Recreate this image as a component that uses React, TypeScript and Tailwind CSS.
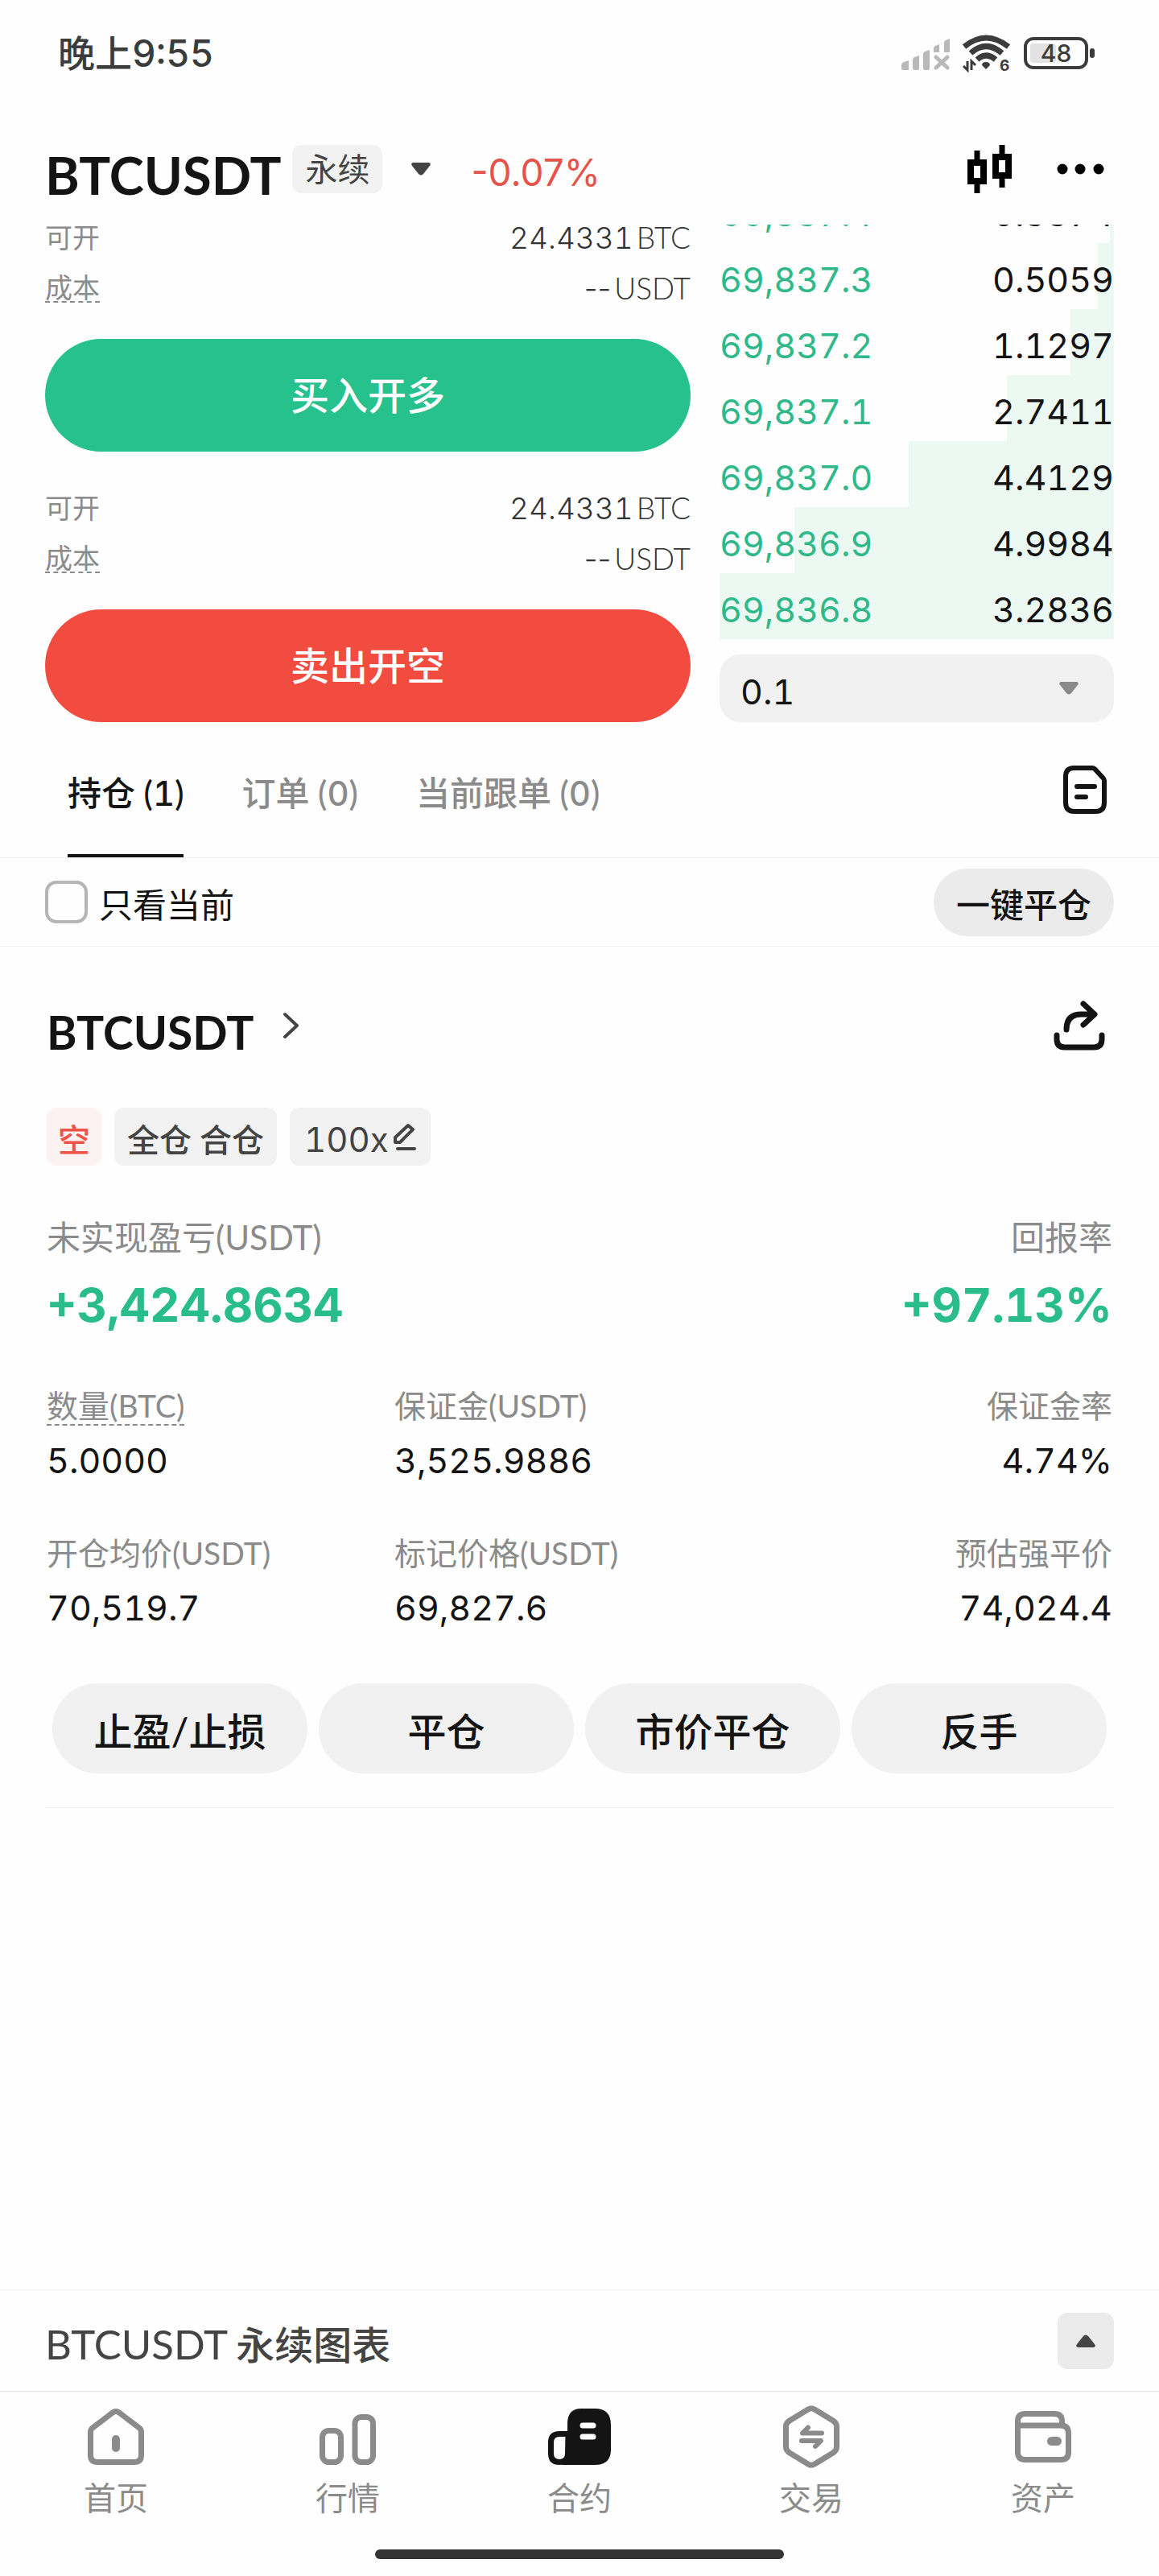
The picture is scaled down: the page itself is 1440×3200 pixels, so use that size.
import type { ReactNode } from "react";

const bids = [
  { price: "69,837.4", size: "0.3374", depth: 1 },
  { price: "69,837.3", size: "0.5059", depth: 4 },
  { price: "69,837.2", size: "1.1297", depth: 11 },
  { price: "69,837.1", size: "2.7411", depth: 27 },
  { price: "69,837.0", size: "4.4129", depth: 52 },
  { price: "69,836.9", size: "4.9984", depth: 81 },
  { price: "69,836.8", size: "3.2836", depth: 100 },
];

const tabs = [
  { label: "持仓", count: 1 },
  { label: "订单", count: 0 },
  { label: "当前跟单", count: 0 },
];

const stats = [
  { label: "数量(BTC)", value: "5.0000", hint: true },
  { label: "保证金(USDT)", value: "3,525.9886" },
  { label: "保证金率", value: "4.74%" },
  { label: "开仓均价(USDT)", value: "70,519.7" },
  { label: "标记价格(USDT)", value: "69,827.6" },
  { label: "预估强平价", value: "74,024.4" },
];

const actions = ["止盈/止损", "平仓", "市价平仓", "反手"];

export default function App() {
  return (
    <div className="flex min-h-screen flex-col bg-[#fefefe] text-[#141414] [font-family:Lato,'Noto_Sans_CJK_SC',sans-serif]">
      <StatusBar />
      <Header />
      <section className="grid h-[618px] grid-cols-[802fr_490fr] content-end items-end gap-9 overflow-hidden px-14">
        <div className="flex flex-col gap-10">
          <OrderSide label="买入开多" className="bg-[#26c18c]" />
          <OrderSide label="卖出开空" className="bg-[#f24c40]" />
        </div>
        <OrderBook />
      </section>
      <PositionTabs />
      <FilterRow />
      <Position />
      <div className="mt-auto">
        <ChartBar />
        <BottomNav />
      </div>
    </div>
  );
}

function Num({ children, className = "" }: { children: ReactNode; className?: string }) {
  return <span className={`[font-family:Inter,sans-serif] ${className}`}>{children}</span>;
}

function StatusBar() {
  return (
    <div className="flex h-[132px] items-center justify-between pl-[72px] pr-20 text-[#3c3c3c]">
      <div className="text-[46px] font-medium leading-none">
        晚上<Num className="tabular-nums">9:55</Num>
      </div>
      <div className="flex items-center gap-4">
        <svg width="60" height="42" viewBox="0 0 60 42" fill="#b9b9b9">
          <path d="M0 36q0-3 3-4l6-2v12H2q-2 0-2-2z" />
          <path d="M14 29q0-2 2-3l6-2v16q0 2-2 2h-4q-2 0-2-2z" />
          <path d="M27 22q0-2 2-3l6-2v23q0 2-2 2h-4q-2 0-2-2z" />
          <path d="M40 15q0-2 2-3l5-2v10h-7z" />
          <path d="M53 8q0-2 2-3l5-2v17h-7z" />
          <path d="M43 26l14 13M57 26L43 39" stroke="#b9b9b9" strokeWidth="5" strokeLinecap="round" />
        </svg>
        <svg width="60" height="46" viewBox="0 0 60 46" fill="none" stroke="#3c3c3c" className="overflow-visible">
          <path d="M2 15Q29-7 57 15" strokeWidth="7" />
          <path d="M10 23Q29 6 49 23" strokeWidth="7" />
          <path d="M18 31Q29 21 41 31" strokeWidth="7" />
          <path d="M29 34q5 0 5 4l-5 5-5-5q0-4 5-4z" fill="#3c3c3c" stroke="none" />
          <path d="M6 33v11l-5-5M11 44V33l5 5" strokeWidth="3" />
          <text x="46" y="45" fontSize="19" fontWeight="700" fontFamily="Inter, sans-serif" fill="#3c3c3c" stroke="none">
            6
          </text>
        </svg>
        <div className="flex items-center gap-0.5">
          <div className="relative flex h-10 w-20 items-center justify-center rounded-xl border-4 border-[#3c3c3c]">
            <span className="absolute inset-y-1 left-1 w-8 rounded bg-[#e2e2e2]" />
            <Num className="relative text-[30px] font-medium leading-none">48</Num>
          </div>
          <span className="h-3 w-1.5 rounded-sm bg-[#3c3c3c]" />
        </div>
      </div>
    </div>
  );
}

function Header() {
  return (
    <header className="flex h-[147px] items-center pl-14 pr-[68px] pt-2">
      <h1 className="pt-4 text-[65px] font-bold leading-none">BTCUSDT</h1>
      <span className="ml-3.5 flex h-[60px] w-28 items-center justify-center rounded-xl bg-[#f2f2f2] text-[40px] text-[#444]">
        永续
      </span>
      <button aria-label="切换合约" className="ml-9">
        <Triangle className="h-4 w-6 text-[#444]" />
      </button>
      <Num className="ml-[50px] pt-2 text-[46px] leading-none text-[#e5534b]">-0.07%</Num>
      <button aria-label="K线" className="ml-auto">
        <svg width="56" height="60" viewBox="0 0 56 60" fill="none" stroke="#000" strokeWidth="8">
          <path d="M12 7v14M12 46v14M43 0v14M43 39v14" strokeWidth="7" />
          <rect x="4" y="22" width="16" height="23" />
          <rect x="35" y="15" width="16" height="23" />
        </svg>
      </button>
      <button aria-label="更多" className="ml-[54px]">
        <svg width="60" height="16" viewBox="0 0 60 16">
          <circle cx="8" cy="8" r="6.5" />
          <circle cx="30" cy="8" r="6.5" />
          <circle cx="53" cy="8" r="6.5" />
        </svg>
      </button>
    </header>
  );
}

function Triangle({ className }: { className: string }) {
  return (
    <svg viewBox="0 0 24 16" className={className} fill="currentColor">
      <path d="M2 0h20q3 1 1 4l-8 10q-3 3-6 0L1 4Q-1 1 2 0z" />
    </svg>
  );
}

function OrderSide({ label, className }: { label: string; className: string }) {
  return (
    <div>
      <div className="flex h-[63px] items-center justify-between pb-1">
        <span className="text-[34px] leading-none text-[#8b8b8b]">可开</span>
        <Amount>
          <Num className="tabular-nums">24.4331</Num>BTC
        </Amount>
      </div>
      <div className="flex h-[63px] items-center justify-between pb-1">
        <span className="border-b-2 border-dashed border-[#8b8b8b] text-[34px] leading-none text-[#8b8b8b]">成本</span>
        <Amount>
          <Num>--</Num>USDT
        </Amount>
      </div>
      <button className={`mt-[30px] h-[140px] w-full rounded-full text-[48px] font-medium text-white ${className}`}>
        {label}
      </button>
    </div>
  );
}

function Amount({ children }: { children: ReactNode }) {
  return <span className="flex items-baseline gap-1 text-[37px] font-light leading-none text-[#333]">{children}</span>;
}

function OrderBook() {
  return (
    <div>
      <table className="w-full text-[43px] leading-none tabular-nums [font-family:Inter,sans-serif]">
        <tbody>
          {bids.map((b) => (
            <tr
              key={b.price}
              className="h-[82px]"
              style={{ backgroundImage: `linear-gradient(to left, #ecf9f3 ${b.depth}%, transparent ${b.depth}%)` }}
            >
              <td className="p-0 pt-2 text-[#2fb98a]">{b.price}</td>
              <td className="p-0 pt-2 text-right">{b.size}</td>
            </tr>
          ))}
        </tbody>
      </table>
      <div className="relative mt-[19px]">
        <select
          aria-label="深度"
          className="block h-[84px] w-full appearance-none rounded-[26px] bg-[#f1f1f1] pl-[26px] pt-2 text-[43px] tabular-nums [font-family:Inter,sans-serif]"
        >
          <option>0.1</option>
          <option>1</option>
          <option>10</option>
        </select>
        <Triangle className="pointer-events-none absolute right-[43px] top-[34px] h-4 w-[26px] text-[#8b8b8b]" />
      </div>
    </div>
  );
}

function PositionTabs() {
  return (
    <div className="flex h-[169px] items-center justify-between border-b border-[#f0f0f0] pl-[84px] pr-16">
      <div className="flex h-full gap-[72px]">
        {tabs.map((t, i) => (
          <button
            key={t.label}
            className={
              i === 0
                ? "border-b-4 border-[#141414] pt-3 text-[42px] font-medium"
                : "border-b-4 border-transparent pt-3 text-[42px] font-medium text-[#8b8b8b]"
            }
          >
            {t.label} (<Num className="tabular-nums">{t.count}</Num>)
          </button>
        ))}
      </div>
      <button aria-label="历史记录">
        <svg width="56" height="60" viewBox="0 0 56 60" fill="none" stroke="#141414" strokeWidth="6" strokeLinecap="round" strokeLinejoin="round">
          <path d="M14 3h23q2 0 3 1l11 12q1 1 1 3v27q0 11-11 11H15Q4 57 4 46V14Q4 3 14 3z" />
          <path d="M18 26h22M18 39h11" />
        </svg>
      </button>
    </div>
  );
}

function FilterRow() {
  return (
    <div className="flex h-[110px] items-center justify-between border-b border-[#f0f0f0] px-14">
      <label className="flex items-center gap-3.5 text-[42px] leading-none">
        <input type="checkbox" className="size-[53px] appearance-none rounded-[14px] border-4 border-[#b5b5b5]" />
        <span className="pt-1.5">只看当前</span>
      </label>
      <button className="h-[84px] rounded-full bg-[#ebebeb] px-7 pt-2 text-[42px] font-medium">一键平仓</button>
    </div>
  );
}

function Position() {
  return (
    <section className="px-14">
      <div className="px-0.5">
        <div className="mt-[62px] flex h-[72px] items-center justify-between pr-2">
          <a href="#position" className="flex items-center gap-9">
            <h2 className="pt-4 text-[57px] font-bold leading-none">BTCUSDT</h2>
            <svg width="22" height="34" viewBox="0 0 22 34" fill="none" stroke="#444" strokeWidth="4" strokeLinecap="round" strokeLinejoin="round">
              <path d="M3 3l15 14L3 31" />
            </svg>
          </a>
          <button aria-label="分享">
            <svg width="66" height="62" viewBox="0 0 66 62" fill="none" stroke="#141414" strokeWidth="7" strokeLinecap="round" strokeLinejoin="round">
              <path d="M17 36Q17 17 35 17h16M38 4l14 13-14 13" />
              <path d="M5 43v5q0 10 10 10h36q10 0 10-10v-5" />
            </svg>
          </button>
        </div>

        <div className="mt-[66px] flex h-[72px] items-stretch gap-4 text-[40px] font-medium leading-none text-[#444]">
          <span className="flex items-center rounded-xl bg-[#fcf2f1] px-3.5 pt-2 text-[#ee5248]">空</span>
          <span className="flex items-center rounded-xl bg-[#f2f2f2] px-4 pt-2">全仓 合仓</span>
          <button className="flex items-center gap-1.5 rounded-xl bg-[#f2f2f2] px-[18px]">
            <Num className="pt-2 text-[42px] font-normal tabular-nums">100x</Num>
            <svg width="28" height="34" viewBox="0 0 28 34" fill="none" stroke="#444" strokeWidth="4" strokeLinecap="round" strokeLinejoin="round">
              <path d="M2 24v-6L18 3l6 5L8 24z" />
              <path d="M5 32h21" />
            </svg>
          </button>
        </div>

        <div className="mt-[63px] flex justify-between text-[42px] leading-[52px] text-[#8b8b8b]">
          <span>未实现盈亏(USDT)</span>
          <span>回报率</span>
        </div>
        <div className="mt-7 flex justify-between text-[58px] font-bold leading-[60px] tabular-nums text-[#28bd8a]">
          <Num>+3,424.8634</Num>
          <Num>+97.13%</Num>
        </div>

        <dl className="mt-[71px] grid grid-cols-[432fr_432fr_460fr] gap-y-[67px]">
          {stats.map((s) => (
            <div key={s.label} className="nth-[3n]:text-right">
              <dt className="h-12 text-[39px] leading-[48px] text-[#8b8b8b]">
                <span className={s.hint ? "border-b-2 border-dashed border-[#8b8b8b]" : ""}>{s.label}</span>
              </dt>
              <dd className="mt-5 text-[43px] leading-[48px] tabular-nums [font-family:Inter,sans-serif]">{s.value}</dd>
            </div>
          ))}
        </dl>

        <div className="mt-[70px] grid grid-cols-4 gap-[14px] px-[7px]">
          {actions.map((a) => (
            <button key={a} className="h-28 rounded-full bg-[#f1f1f1] pt-2 text-[48px] font-medium leading-none">
              {a}
            </button>
          ))}
        </div>
      </div>
      <hr className="mt-[42px] border-[#f0f0f0]" />
    </section>
  );
}

function ChartBar() {
  return (
    <div className="flex h-[126px] items-center justify-between border-t border-[#f0f0f0] px-14 text-[#444]">
      <span className="flex items-baseline gap-2.5 pt-2 leading-none">
        <span className="text-[51px]">BTCUSDT</span>
        <span className="text-[48px] font-medium">永续图表</span>
      </span>
      <button aria-label="展开图表" className="flex size-[70px] items-center justify-center rounded-xl bg-[#ebebeb]">
        <Triangle className="h-4 w-[26px] rotate-180" />
      </button>
    </div>
  );
}

function BottomNav() {
  return (
    <nav className="border-t border-[#e4e4e4] pb-[21px]">
      <div className="grid grid-cols-5 pt-4">
        <NavItem label="首页">
          <path d="M36 10q4-3 8 0l25 19q2.5 2 2.5 5v29q0 8.5-8.5 8.5H17q-8.5 0-8.5-8.5V34q0-3 2.5-5z" />
          <path d="M40 43v11" strokeWidth="10" />
        </NavItem>
        <NavItem label="行情">
          <rect x="8.5" y="32.5" width="23" height="39" rx="8" />
          <rect x="49" y="15.5" width="22.5" height="56" rx="8" />
        </NavItem>
        <NavItem label="合约">
          <path d="M42 5h17q20 0 20 20v31q0 19-20 19H16q9-1 9-10V24Q25 5 42 5z" fill="#141414" stroke="none" />
          <path d="M26 36.5H15q-10.5 0-10.5 10.5v14q0 10.5 10.5 10.5 10.5 0 10.5-10.5z" stroke="#141414" />
          <path d="M44 26h13M44 40h13" stroke="#fff" />
        </NavItem>
        <NavItem label="交易">
          <path d="M36 6q4-2.5 8 0l23 14q4.5 3 4.5 7v26q0 4-4.5 7L44 74q-4 2.5-8 0L13 60q-4.5-3-4.5-7V27q0-4 4.5-7z" />
          <path d="M53 35.5H29l7-7M28 45h24l-7 7" strokeWidth="6" />
        </NavItem>
        <NavItem label="资产">
          <path d="M8.5 26v-5q0-9.5 9.5-9.5h36q9.5 0 9.5 9.5v5" />
          <path d="M8.5 26H62q9.5 0 9.5 9.5v24q0 9-9.5 9H18q-9.5 0-9.5-9z" />
          <rect x="45" y="40" width="18" height="11" rx="5.5" fill="#8b8b8b" stroke="none" />
        </NavItem>
      </div>
      <div className="mx-auto mt-10 h-3 w-[508px] rounded-full bg-[#333]" />
    </nav>
  );
}

function NavItem({ label, children }: { label: string; children: ReactNode }) {
  return (
    <a href="#nav" className="flex flex-col items-center gap-3 text-[40px] leading-[48px] text-[#8b8b8b]">
      <svg width="80" height="80" viewBox="0 0 80 80" fill="none" stroke="#8b8b8b" strokeWidth="7" strokeLinecap="round" strokeLinejoin="round">
        {children}
      </svg>
      {label}
    </a>
  );
}
